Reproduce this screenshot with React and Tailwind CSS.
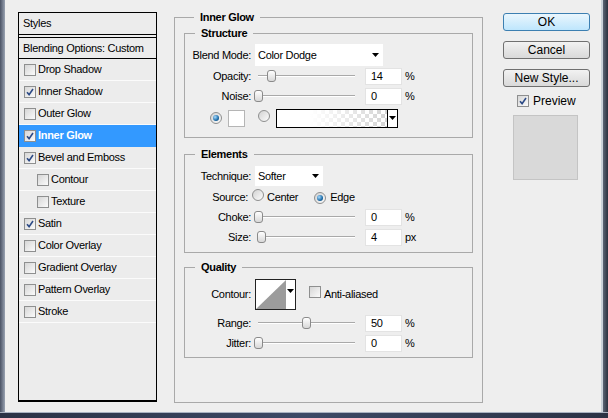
import React from "react";

// list on the left of the layer style dialog
const styleItems = [
  { label: "Drop Shadow", checked: false },
  { label: "Inner Shadow", checked: true },
  { label: "Outer Glow", checked: false },
  { label: "Inner Glow", checked: true, active: true },
  { label: "Bevel and Emboss", checked: true },
  { label: "Contour", checked: false, indent: true },
  { label: "Texture", checked: false, indent: true },
  { label: "Satin", checked: true },
  { label: "Color Overlay", checked: false },
  { label: "Gradient Overlay", checked: false },
  { label: "Pattern Overlay", checked: false },
  { label: "Stroke", checked: false },
];

const Check = ({ checked }) => (
  <span className="inline-flex h-[12px] w-[12px] shrink-0 items-center justify-center border border-[#8e8f8f] bg-linear-to-br from-[#d6d6d6] to-[#fbfbfb]">
    {checked && (
      <svg width="8" height="8" viewBox="0 0 8 8">
        <path d="M1 4.2 L3.1 6.6 L7 1" fill="none" stroke="#2c4a86" strokeWidth="1.6" />
      </svg>
    )}
  </span>
);

const Radio = ({ on }) => (
  <span className="inline-flex h-[12px] w-[12px] shrink-0 items-center justify-center rounded-full border border-[#8e8f8f] bg-linear-to-br from-[#d2d2d2] to-[#fcfcfc]">
    {on && <span className="h-[6px] w-[6px] rounded-full bg-[radial-gradient(circle_at_35%_35%,#a8dcff,#1d6ca8_60%,#0d3d66)]" />}
  </span>
);

const Arrow = () => (
  <svg width="7" height="4" viewBox="0 0 7 4">
    <path d="M0 0 H7 L3.5 4 Z" fill="#000" />
  </svg>
);

const Slider = ({ value }) => (
  <div className="relative ml-[3px] h-[14px] w-[97px]">
    <div className="absolute left-0 right-0 top-[6px] h-[2px] border-t border-[#a9a9a9] border-b border-b-white" />
    <div
      className="absolute top-[1px] h-[12px] w-[9px] rounded-[3px] border border-[#8a8a8a] bg-linear-to-b from-white to-[#d8d8d8]"
      style={{ left: `${value * 0.97 - 4.5}px` }}
    />
  </div>
);

const Field = ({ value }) => (
  <div className="flex h-[17px] w-[37px] items-center border border-[#e3e3e3] bg-white pl-[5px]">{value}</div>
);

const SliderRow = ({ label, value, unit, className = "" }) => (
  <div className={`flex h-[20px] items-center ${className}`}>
    <span className="w-[66px] text-right">{label}</span>
    <div className="ml-[4px] w-[110px]">
      <Slider value={value} />
    </div>
    <Field value={value} />
    <span className="ml-[3px]">{unit}</span>
  </div>
);

const Group = ({ title, className = "", children }) => (
  <fieldset className={`border border-[#a9a9a9] ${className}`}>
    <legend className="ml-[10px] px-[6px] font-bold leading-[14px]">{title}</legend>
    {children}
  </fieldset>
);

const Button = ({ children, primary, className = "" }) => (
  <div
    className={`flex h-[18px] items-center justify-center rounded-[3px] border text-[12px] tracking-normal ${
      primary
        ? "border-[#3c7fb1] bg-linear-to-b from-[#eaf6fd] to-[#bee6fd]"
        : "border-[#707070] bg-linear-to-b from-[#f2f2f2] to-[#d9d9d9]"
    } ${className}`}
  >
    {children}
  </div>
);

export default function App() {
  return (
    <div className="flex h-[418px] w-[608px] flex-col overflow-hidden bg-[#2f3648] font-['Liberation_Sans',Arial,sans-serif] text-[11px] tracking-[-0.3px] text-black">
      <div className="flex flex-1">
        <div className="w-[5px] bg-linear-to-r from-[#4b5365] to-[#9aa3b2]" />

        <div className="flex flex-1 items-start border-r-2 border-[#c9d0d9] bg-[#eeeeee] pl-[13px]">
          {/* styles list */}
          <div className="mt-[12px] h-[390px] w-[139px] border border-b-2 border-black bg-[#ececec]">
            <div className="flex h-[22px] items-center border-b border-black pl-[4px]">Styles</div>
            <div className="h-[2px]" />
            <div className="flex h-[22px] items-center border-y border-black pl-[4px]">Blending Options: Custom</div>
            {styleItems.map((item) => (
              <div
                key={item.label}
                className={`flex h-[22px] items-center border-b ${
                  item.active ? "border-[#3399ff] bg-[#3399ff] font-bold text-white" : "border-[#fbfbfb]"
                } ${item.indent ? "pl-[18px]" : "pl-[5px]"}`}
              >
                <Check checked={item.checked} />
                <span className="ml-[2px]">{item.label}</span>
              </div>
            ))}
          </div>

          {/* settings */}
          <Group title="Inner Glow" className="ml-[17px] mt-[10px] h-[393px] w-[309px] px-[9px]">
            <Group title="Structure" className="mt-[2px] h-[112px]">
              <div className="mt-[4px] flex h-[22px] items-center">
                <span className="w-[66px] text-right">Blend Mode:</span>
                <div className="ml-[4px] flex h-[22px] w-[128px] items-center justify-between bg-white pl-[3px] pr-[4px]">
                  <span>Color Dodge</span>
                  <Arrow />
                </div>
              </div>
              <SliderRow label="Opacity:" value={14} unit="%" />
              <SliderRow label="Noise:" value={0} unit="%" />
              <div className="mt-[1px] flex h-[22px] items-center pl-[25px]">
                <Radio on />
                <div className="ml-[6px] h-[17px] w-[17px] border border-[#b5b5b5] bg-white" />
                <span className="ml-[13px]">
                  <Radio />
                </span>
                <div className="ml-[6px] flex h-[19px] w-[122px] border border-black">
                  <div className="relative flex-1 bg-[conic-gradient(#d4d4d4_25%,#ffffff_0_50%,#d4d4d4_0_75%,#ffffff_0)] bg-[length:8px_8px]">
                    <div className="absolute inset-0 bg-linear-to-r from-white from-30% to-transparent" />
                  </div>
                  <div className="flex w-[10px] items-center justify-center border-l border-black bg-white">
                    <Arrow />
                  </div>
                </div>
              </div>
            </Group>

            <Group title="Elements" className="mt-[9px] h-[106px]">
              <div className="mt-[5px] flex h-[20px] items-center">
                <span className="w-[66px] text-right">Technique:</span>
                <div className="ml-[4px] flex h-[20px] w-[68px] items-center justify-between bg-white pl-[3px] pr-[4px]">
                  <span>Softer</span>
                  <Arrow />
                </div>
              </div>
              <div className="mt-[1px] flex h-[20px] items-center">
                <span className="w-[63px] text-right">Source:</span>
                <span className="ml-[4px]">
                  <Radio />
                </span>
                <span className="ml-[3px]">Center</span>
                <span className="ml-[16px]">
                  <Radio on />
                </span>
                <span className="ml-[4px]">Edge</span>
              </div>
              <SliderRow label="Choke:" value={0} unit="%" />
              <SliderRow label="Size:" value={4} unit="px" />
            </Group>

            <Group title="Quality" className="mt-[7px] h-[98px]">
              <div className="mt-[5px] flex h-[31px] items-center">
                <span className="w-[66px] text-right">Contour:</span>
                <div className="ml-[4px] flex h-[31px] w-[41px] border border-[#222]">
                  <svg width="30" height="29" viewBox="0 0 30 29" className="bg-white">
                    <path d="M0 29 L30 0 V29 Z" fill="#9c9c9c" />
                  </svg>
                  <div className="flex flex-1 items-start justify-center bg-white pt-[9px]">
                    <Arrow />
                  </div>
                </div>
                <span className="ml-[13px]">
                  <Check />
                </span>
                <span className="ml-[3px]">Anti-aliased</span>
              </div>
              <SliderRow label="Range:" value={50} unit="%" className="mt-[3px]" />
              <SliderRow label="Jitter:" value={0} unit="%" />
            </Group>
          </Group>

          {/* buttons */}
          <div className="ml-[20px] mt-[13px] flex w-[87px] flex-col">
            <Button primary>OK</Button>
            <Button className="mt-[10px]">Cancel</Button>
            <Button className="mt-[10px]">New Style...</Button>
            <div className="mt-[7px] flex h-[14px] items-center pl-[14px] text-[12px] tracking-normal">
              <Check checked />
              <span className="ml-[4px]">Preview</span>
            </div>
            <div className="ml-[10px] mt-[7px] h-[65px] w-[65px] border border-[#c4c4c4] bg-[#d9d9d9]" />
          </div>
        </div>

        <div className="w-[5px] bg-linear-to-r from-[#5b6475] to-[#2b3140]" />
      </div>
      <div className="h-[6px] border-t border-[#aab3c2] bg-linear-to-r from-[#2b3245] via-[#3d4a66] to-[#2b3245]" />
    </div>
  );
}
